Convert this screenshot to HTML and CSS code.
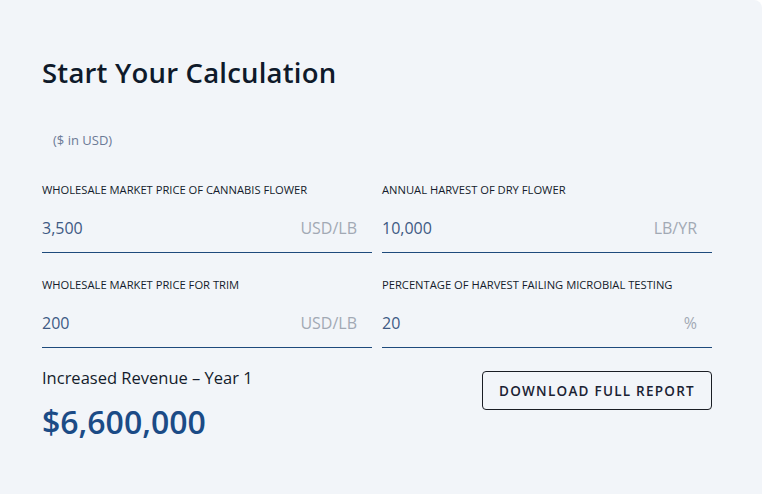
FILE: index.html
```html
<!DOCTYPE html>
<html>
<head>
<meta charset="utf-8">
<link rel="stylesheet" href="styles.css">
</head>
<body>
<div class="card">
  <h1 class="title">Start Your Calculation</h1>
  <div class="note">($ in USD)</div>
  <div class="grid">
    <div class="field">
      <div class="label">WHOLESALE MARKET PRICE OF CANNABIS FLOWER</div>
      <div class="input"><span class="value">3,500</span><span class="unit">USD/LB</span></div>
    </div>
    <div class="field">
      <div class="label">ANNUAL HARVEST OF DRY FLOWER</div>
      <div class="input"><span class="value">10,000</span><span class="unit">LB/YR</span></div>
    </div>
    <div class="field">
      <div class="label">WHOLESALE MARKET PRICE FOR TRIM</div>
      <div class="input"><span class="value">200</span><span class="unit">USD/LB</span></div>
    </div>
    <div class="field">
      <div class="label">PERCENTAGE OF HARVEST FAILING MICROBIAL TESTING</div>
      <div class="input"><span class="value">20</span><span class="unit">%</span></div>
    </div>
  </div>
  <div class="result">
    <div class="result-text">
      <div class="result-label">Increased Revenue – Year 1</div>
      <div class="result-value">$6,600,000</div>
    </div>
    <button class="btn">DOWNLOAD FULL REPORT</button>
  </div>
</div>
</body>
</html>
```
FILE: styles.css
```css
html, body {
  margin: 0;
  padding: 0;
  background: #ffffff;
}
body {
  font-family: "Open Sans", "Noto Sans", sans-serif;
}
.card {
  width: 762px;
  height: 494px;
  box-sizing: border-box;
  background: #f2f5f9;
  border-radius: 0 8px 0 0;
  padding: 55px 50px 0 42px;
}
.title {
  margin: 0;
  font-size: 27.5px;
  font-weight: 600;
  color: #0f1a2a;
  line-height: 36px;
  letter-spacing: 0.2px;
}
.note {
  margin: 40px 0 0 11px;
  font-size: 13px;
  color: #6c7a96;
  line-height: 18px;
}
.grid {
  display: grid;
  grid-template-columns: 330px 330px;
  column-gap: 10px;
  row-gap: 25px;
  margin-top: 34px;
}
.label {
  font-size: 11.2px;
  font-weight: 500;
  color: #141c2c;
  line-height: 14px;
}
.input {
  display: flex;
  justify-content: space-between;
  align-items: flex-end;
  height: 56px;
  box-sizing: border-box;
  padding: 0 15px 13px 0;
  border-bottom: 1px solid #1e4a7c;
}
.value {
  font-size: 16px;
  line-height: 22px;
  color: #3e5a84;
}
.unit {
  font-size: 16px;
  line-height: 22px;
  color: #a2a9b4;
}
.result {
  display: flex;
  justify-content: space-between;
  align-items: flex-start;
  width: 670px;
  margin-top: 18px;
}
.result-label {
  font-size: 16.5px;
  font-weight: 500;
  color: #141c2c;
  line-height: 24px;
}
.result-value {
  margin-top: 12px;
  font-size: 32px;
  font-weight: 600;
  color: #1b4b86;
  line-height: 40px;
}
.btn {
  margin-top: 5px;
  width: 230px;
  height: 39px;
  background: transparent;
  border: 1px solid #1a1d24;
  border-radius: 4px;
  font-family: "Open Sans", "Noto Sans", sans-serif;
  font-size: 13.5px;
  font-weight: 600;
  letter-spacing: 1.25px;
  color: #1a2233;
  padding: 0;
  cursor: pointer;
}
```
